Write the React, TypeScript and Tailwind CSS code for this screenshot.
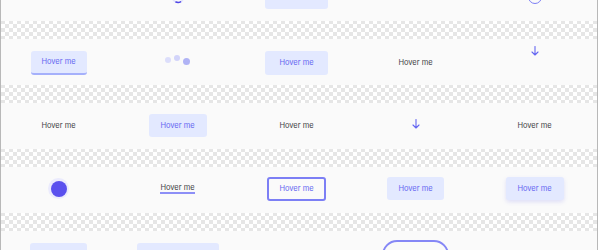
import clsx from "clsx";

function Btn({ className }: { className?: string }) {
  return (
    <div
      className={clsx(
        "h-6 px-[11px] flex items-center justify-center whitespace-nowrap rounded-[3px] bg-[#e3e9ff] text-[#6466f1]",
        className
      )}
    >
      Hover me
    </div>
  );
}

function Text() {
  return <span className="text-[#3f3f46] whitespace-nowrap">Hover me</span>;
}

function Arrow({ className }: { className?: string }) {
  return (
    <svg width="8" height="10" viewBox="0 0 8 10" className={className} fill="none">
      <path d="M4 0.5V9 M1 6 L4 9 L7 6" stroke="#6466f1" strokeWidth="1.1" strokeLinecap="round" strokeLinejoin="round" />
    </svg>
  );
}

function Row({ children }: { children: React.ReactNode }) {
  return (
    <div className="h-[46px] shrink-0 bg-[#fafafa] grid grid-cols-[repeat(5,119px)] items-center justify-items-center ml-[-2px]">
      {children}
    </div>
  );
}

export default function App() {
  return (
    <div className="w-[600px] h-[250px] overflow-hidden bg-white">
      <div className="w-[598px] h-[250px] border-x border-[#b8b8b8] bg-[conic-gradient(#e6e6e6_25%,#ffffff_0_50%,#e6e6e6_0_75%,#ffffff_0)] bg-size-[8px_8px] overflow-hidden font-['Inter',sans-serif] text-[7.5px] font-normal">
        <div className="flex flex-col gap-[18px] mt-[-25px]">
          {/* row 0 – cut off at the top */}
          <Row>
            <div />
            <svg width="14" height="14" viewBox="0 0 14 14" className="mt-[-3px]">
              <circle cx="7" cy="7" r="5.5" stroke="#e2e3fc" strokeWidth="1.6" fill="none" />
              <path d="M9.5 11.9 A5.5 5.5 0 0 1 5 12.1" stroke="#4f46e5" strokeWidth="1.6" fill="none" strokeLinecap="round" />
            </svg>
            <Btn className="w-[63px] mt-[-3px]" />
            <div />
            <div className="w-[14px] h-[14px] rounded-full border-[1.5px] border-[#7c7ff5] mt-[-3px]" />
          </Row>

          {/* row 1 */}
          <Row>
            <Btn className="mt-[1px] w-[56px] border-b-2 border-[#a5b0fb]" />
            <div className="flex items-center gap-[3px] mt-[-5px]">
              <span className="w-[6px] h-[6px] rounded-full bg-[#dcdefb] mt-[1px]" />
              <span className="w-[6px] h-[6px] rounded-full bg-[#d2d4fa] mt-[-3px]" />
              <span className="w-[7px] h-[7px] rounded-full bg-[#b0b3f5] mt-[4px]" />
            </div>
            <Btn className="mt-[1px] w-[63px]" />
            <div className="mt-[2px]">
              <Text />
            </div>
            <Arrow className="mt-[-23px]" />
          </Row>

          {/* row 2 */}
          <Row>
            <Text />
            <Btn className="w-[58px] h-[23px] mt-[-1px]" />
            <Text />
            <Arrow className="mt-[-5px]" />
            <Text />
          </Row>

          {/* row 3 */}
          <Row>
            <div className="w-[21px] h-[21px] rounded-full bg-[#ebebfd] flex items-center justify-center mt-[-3px]">
              <div className="w-4 h-4 rounded-full bg-[#5a50ee]" />
            </div>
            <span className="text-[#3f3f46] whitespace-nowrap border-b-2 border-[#8d8ff7] leading-none pb-[1px] mt-[-2px]">
              Hover me
            </span>
            <div className="h-6 w-[59px] flex items-center justify-center whitespace-nowrap rounded-[3px] border-2 border-[#7c7ff5] text-[#6466f1] mt-[-3px]">
              Hover me
            </div>
            <Btn className="w-[57px] h-[23px] mt-[-3px]" />
            <Btn className="w-[58px] h-[23px] mt-[-3px] shadow-[0_2px_4px_rgba(99,102,241,0.18)]" />
          </Row>

          {/* row 4 – cut off at the bottom */}
          <Row>
            <Btn className="w-[57px] mt-[1px]" />
            <Btn className="w-[82px] mt-[1px]" />
            <div />
            <div className="h-[30px] w-[67px] rounded-full border-2 border-[#8587f6] flex items-center justify-center whitespace-nowrap text-[#6466f1] mt-[1px]">
              Hover me
            </div>
            <div />
          </Row>
        </div>
      </div>
    </div>
  );
}
